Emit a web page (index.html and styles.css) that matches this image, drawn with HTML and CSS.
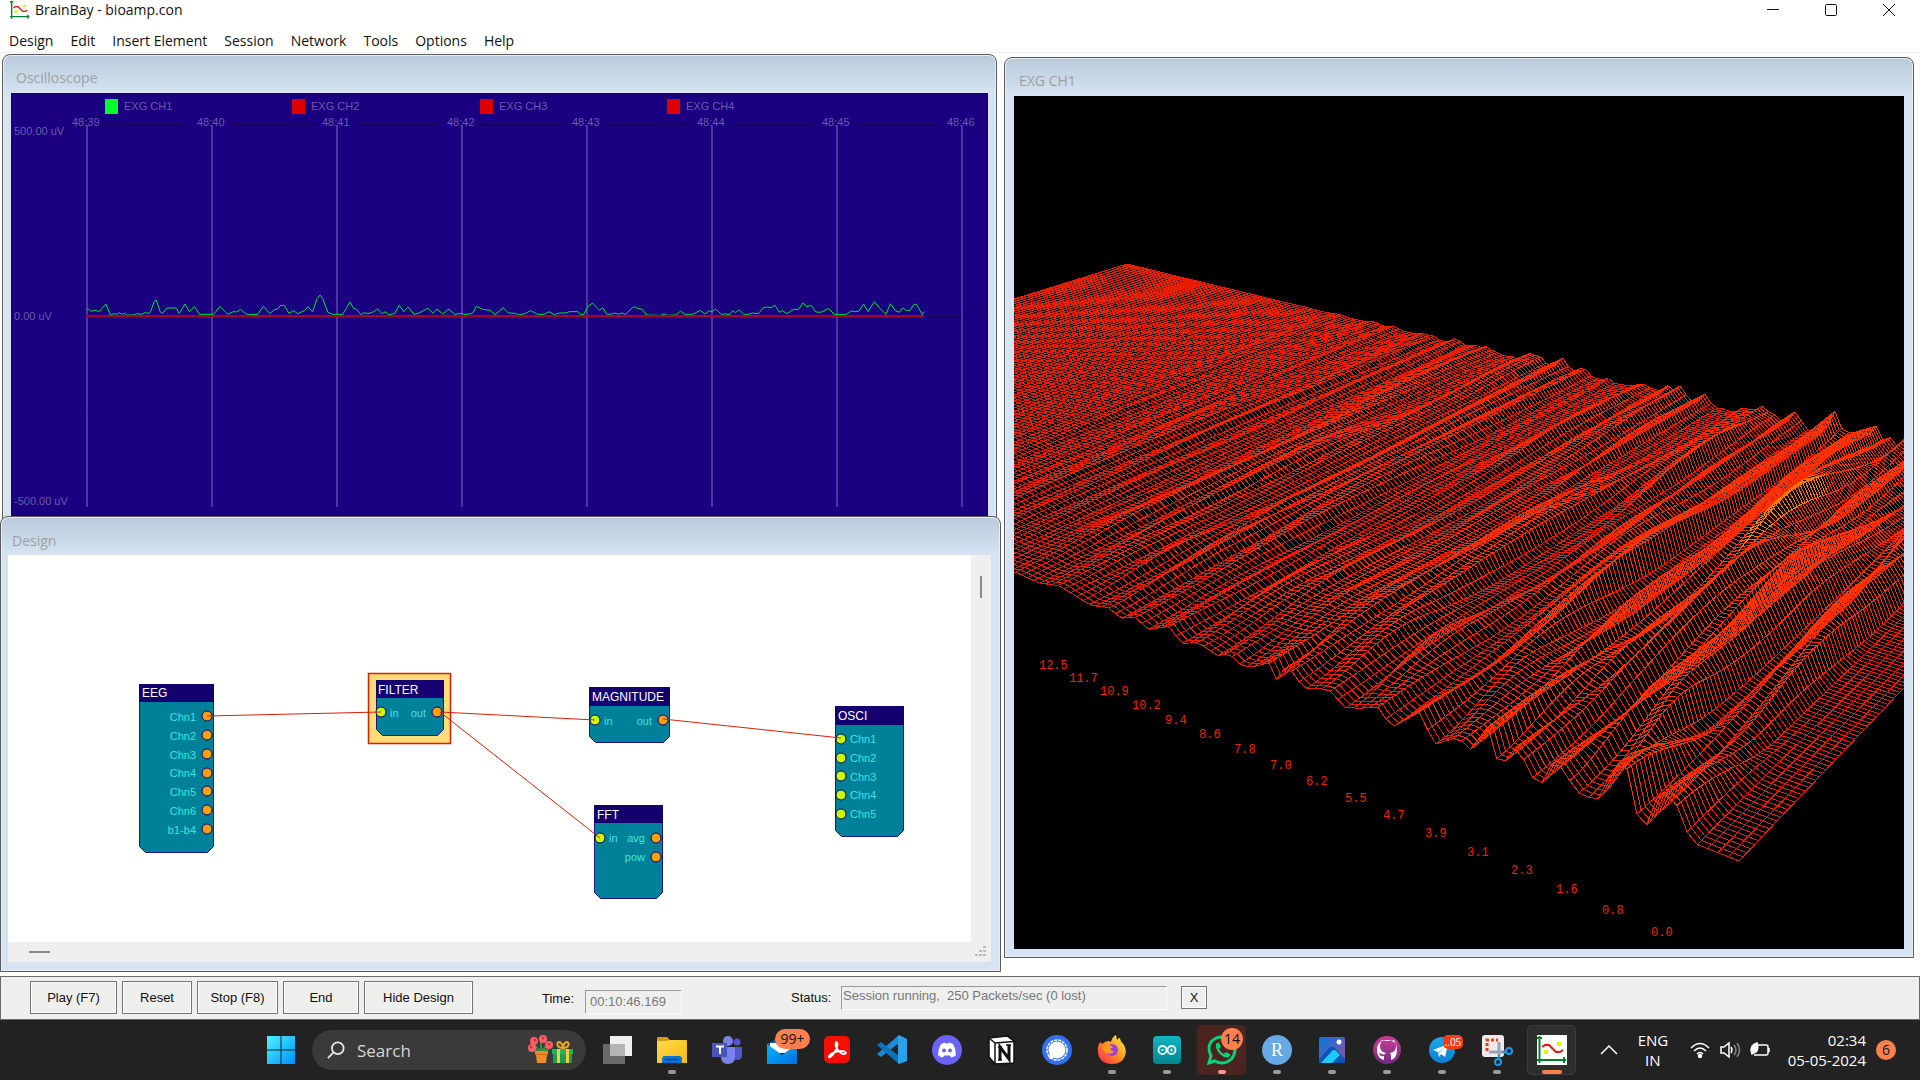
FILE: index.html
```html
<!DOCTYPE html>
<html lang="en">
<head>
<meta charset="utf-8">
<title>BrainBay - bioamp.con</title>
<link rel="stylesheet" href="styles.css">
</head>
<body>
<svg class="defs" aria-hidden="true">
  <defs>
    <linearGradient id="g-start" x1="0" y1="0" x2="1" y2="1"><stop offset="0" stop-color="#4df3ff"/><stop offset="1" stop-color="#0090ff"/></linearGradient>
    <linearGradient id="g-folder" x1="0" y1="0" x2="1" y2="1"><stop offset="0" stop-color="#ffdb4d"/><stop offset="1" stop-color="#f5b912"/></linearGradient>
    <linearGradient id="g-mail" x1="0" y1="0" x2="1" y2="1"><stop offset="0" stop-color="#00b4ff"/><stop offset="1" stop-color="#0070e0"/></linearGradient>
    <linearGradient id="g-fox" x1="1" y1="0" x2="0" y2="1"><stop offset="0" stop-color="#fff44f"/><stop offset=".5" stop-color="#ff9020"/><stop offset="1" stop-color="#ff2050"/></linearGradient>
    <linearGradient id="g-ard" x1="0" y1="0" x2="0" y2="1"><stop offset="0" stop-color="#12b5bd"/><stop offset="1" stop-color="#008592"/></linearGradient>
    <linearGradient id="g-photo" x1="0" y1="0" x2="1" y2="1"><stop offset="0" stop-color="#0078e0"/><stop offset="1" stop-color="#9a4f9c"/></linearGradient>
    <linearGradient id="g-git" x1="0" y1="0" x2="0" y2="1"><stop offset="0" stop-color="#cf3b96"/><stop offset="1" stop-color="#6d2b80"/></linearGradient>
    <linearGradient id="g-tg" x1="0" y1="0" x2="0" y2="1"><stop offset="0" stop-color="#20a6ea"/><stop offset="1" stop-color="#0a80d0"/></linearGradient>
    <symbol id="wave" viewBox="0 0 30 30">
      <path fill="#fffffd" d="M0 0h30v30H0z"/>
      <path stroke="#00802d" stroke-width="2" d="M2.500 1v27M0 25h29M27 22v6M0 3h5"/>
      <path fill="none" stroke="#f01010" stroke-width="2" d="M5 12l3-2h4l4 4 3 3h4l3-2"/>
      <path fill="#d4ff00" d="M7 15h4v4H7zM20 7h4v4h-4z"/>
    </symbol>
  </defs>
</svg>
<div class="app">
  <header class="titlebar">
    <svg class="app-icon" viewBox="0 0 30 30"><use href="#wave"/></svg>
    <h1 class="app-title">BrainBay - bioamp.con</h1>
    <div class="caption">
      <button class="cap-btn" aria-label="Minimize"><svg viewBox="0 0 12 12"><path d="M0 5.500h12"/></svg></button>
      <button class="cap-btn" aria-label="Maximize"><svg viewBox="0 0 12 12"><rect x=".5" y=".5" width="11" height="11" rx="1"/></svg></button>
      <button class="cap-btn" aria-label="Close"><svg viewBox="0 0 12 12"><path d="M0 0l12 12M12 0L0 12"/></svg></button>
    </div>
  </header>
  <nav class="menubar">
    <button>Design</button><button>Edit</button><button>Insert Element</button><button>Session</button><button>Network</button><button>Tools</button><button>Options</button><button>Help</button>
  </nav>

  <main class="mdi">
    <section class="window scope">
      <h2 class="window-title">Oscilloscope</h2>
      <div class="window-body">
        <svg class="fill">
          <g transform="translate(-11 -93)">
            <path class="scope-dim" d="M104 124.500H190M230 124.500H315M355 124.500H440M480 124.500H565M605 124.500H690M730 124.500H815M855 124.500H940M86 507.500H962M924 316.500H961M81 411.500H86"/>
            <path class="scope-grid" d="M87 125V507M212 125V507M337 125V507M462 125V507M587 125V507M712 125V507M837 125V507M962 125V507"/>
            <path fill="#00ff28" d="M105 99h13v15h-13z"/>
            <path fill="#dc0000" d="M292 99h13v15h-13zM480 99h13v15h-13zM667 99h13v15h-13z"/>
            <g class="scope-text">
              <text x="124" y="110">EXG CH1</text><text x="311" y="110">EXG CH2</text><text x="499" y="110">EXG CH3</text><text x="686" y="110">EXG CH4</text>
              <text x="72" y="126">48:39</text><text x="197" y="126">48:40</text><text x="322" y="126">48:41</text><text x="447" y="126">48:42</text><text x="572" y="126">48:43</text><text x="697" y="126">48:44</text><text x="822" y="126">48:45</text><text x="947" y="126">48:46</text>
              <text x="14" y="135">500.00 uV</text><text x="14" y="320">0.00 uV</text><text x="14" y="505">-500.00 uV</text>
            </g>
            <g transform="translate(0 280) scale(.6378 .3333)">
              <polyline class="trace" points="136,88 139,88 143,94 148,91 156,94 166,72 173,104 179,101 183,103 187,98 191,103 195,100 199,105 210,105 214,101 222,103 228,97 232,101 236,95 242,64 245,60 251,95 255,100 262,84 276,84 281,100 290,72 297,95 305,80 313,103 335,103 345,79 357,103 366,95 371,96 377,88 385,101 391,104 404,103 413,79 423,101 431,88 435,88 440,76 446,77 453,100 460,92 467,101 477,92 483,80 490,96 497,56 502,45 506,56 514,97 523,104 537,104 543,85 549,66 554,85 559,88 566,104 571,98 577,101 586,95 592,87 599,101 605,95 610,105 619,100 626,76 633,95 640,81 649,103 657,99 671,85 679,100 685,87 694,102 704,87 713,103 724,100 729,104 741,100 747,79 757,88 769,91 776,104 789,83 797,99 808,100 814,105 824,100 832,92 843,103 853,103 861,95 869,104 877,99 887,99 893,95 906,95 910,103 915,104 922,79 929,69 937,85 940,91 945,83 951,102 957,103 964,99 970,103 975,99 981,103 988,89 994,80 1000,85 1007,88 1014,105 1036,106 1041,102 1046,106 1060,105 1067,93 1074,103 1086,103 1098,91 1105,102 1112,92 1116,95 1122,87 1131,103 1138,102 1144,104 1149,92 1153,98 1159,89 1166,103 1174,103 1180,99 1189,101 1197,83 1204,81 1209,83 1215,76 1222,97 1227,92 1234,101 1240,93 1245,88 1252,88 1259,69 1265,80 1272,76 1279,96 1287,97 1299,85 1308,103 1327,103 1335,93 1341,95 1347,93 1354,72 1361,95 1371,65 1379,84 1389,103 1396,71 1404,92 1410,97 1415,84 1421,91 1427,91 1433,73 1437,73 1446,104 1449,95"/>
            </g>
            <path stroke="#aa0028" stroke-width="2" d="M86 316H924"/>
          </g>
        </svg>
      </div>
    </section>

    <section class="window design">
      <h2 class="window-title">Design</h2>
      <div class="window-body design-body">
        <svg class="fill">
          <defs><circle id="o" r="5" fill="#ffa000" stroke="#14006e"/><circle id="i" r="5" fill="#c8ff00" stroke="#14006e"/></defs>
          <g transform="translate(-8 -555)">
            <rect x="368.500" y="673.500" width="82" height="70" fill="#ffdc78" stroke="#dc1e00" stroke-width="1.500"/>
            <g class="node-body">
              <path d="M139.500 684.500h74v162l-6 6h-62l-6-6z"/>
              <path d="M376.500 680.500h67v49l-6 6h-55l-6-6z"/>
              <path d="M589.500 687.500h80v49l-6 6h-68l-6-6z"/>
              <path d="M594.500 805.500h68v87l-6 6h-56l-6-6z"/>
              <path d="M835.500 706.500h68v124l-6 6h-56l-6-6z"/>
            </g>
            <path fill="#14006e" d="M139 684h75v18h-75zM376 680h68v18h-68zM589 687h81v19h-81zM594 805h69v18h-69zM835 706h69v19h-69z"/>
            <g class="node-title"><text x="142" y="697">EEG</text><text x="378" y="694">FILTER</text><text x="592" y="701">MAGNITUDE</text><text x="597" y="819">FFT</text><text x="838" y="720">OSCI</text></g>
            <g class="port-text end"><text x="196" y="721">Chn1</text><text x="196" y="740">Chn2</text><text x="196" y="759">Chn3</text><text x="196" y="777">Chn4</text><text x="196" y="796">Chn5</text><text x="196" y="815">Chn6</text><text x="196" y="834">b1-b4</text><text x="426" y="717">out</text><text x="652" y="725">out</text><text x="645" y="842">avg</text><text x="645" y="861">pow</text></g>
            <g class="port-text"><text x="390" y="717">in</text><text x="604" y="725">in</text><text x="609" y="842">in</text><text x="850" y="743">Chn1</text><text x="850" y="762">Chn2</text><text x="850" y="781">Chn3</text><text x="850" y="799">Chn4</text><text x="850" y="818">Chn5</text></g>
            <use href="#o" x="207" y="716"/><use href="#o" x="207" y="735"/><use href="#o" x="207" y="754"/><use href="#o" x="207" y="773"/><use href="#o" x="207" y="791"/><use href="#o" x="207" y="810"/><use href="#o" x="207" y="829"/>
            <use href="#i" x="381" y="712"/><use href="#o" x="437" y="712"/><use href="#i" x="595" y="720"/><use href="#o" x="663" y="720"/>
            <use href="#i" x="600" y="838"/><use href="#o" x="656" y="838"/><use href="#o" x="656" y="857"/>
            <use href="#i" x="841" y="739"/><use href="#i" x="841" y="758"/><use href="#i" x="841" y="776"/><use href="#i" x="841" y="795"/><use href="#i" x="841" y="814"/>
            <path class="wire" d="M207 716L381 712M440 712L595 720M440 712L600 838M663 719L841 738"/>
          </g>
        </svg>
        <div class="vscroll"><span class="thumb-v"></span></div>
        <div class="hscroll"><span class="thumb-h"></span></div>
        <svg class="grip" viewBox="0 0 12 12"><path fill="#bdbdbd" d="M8 0h3v2H8zM4 4h3v2H4zM8 4h3v2H8zM0 8h3v2H0zM4 8h3v2H4zM8 8h3v2H8z"/></svg>
      </div>
    </section>

    <section class="window spectrum">
      <h2 class="window-title">EXG CH1</h2>
      <div class="window-body">
        <svg class="fill">
          <g id="surface" class="surface"></g>
          <g class="freq">
            <text x="25" y="573">12.5</text><text x="55" y="586">11.7</text><text x="86" y="599">10.9</text><text x="118" y="613">10.2</text><text x="151" y="628">9.4</text><text x="185" y="642">8.6</text><text x="220" y="657">7.8</text><text x="256" y="673">7.0</text><text x="292" y="689">6.2</text><text x="331" y="706">5.5</text><text x="369" y="723">4.7</text><text x="411" y="741">3.9</text><text x="453" y="760">3.1</text><text x="497" y="778">2.3</text><text x="542" y="797">1.6</text><text x="588" y="818">0.8</text><text x="637" y="840">0.0</text>
          </g>
        </svg>
      </div>
    </section>
  </main>

  <section class="controls">
    <div class="buttons">
      <button class="push w-play">Play (F7)</button><button class="push w-reset">Reset</button><button class="push w-stop">Stop (F8)</button><button class="push w-end">End</button><button class="push w-hide">Hide Design</button>
    </div>
    <label class="field time"><span>Time:</span><input value="00:10:46.169" readonly></label>
    <label class="field status"><span>Status:</span><input value="Session running,&nbsp; 250 Packets/sec (0 lost)" readonly></label>
    <button class="push close">X</button>
  </section>

  <footer class="taskbar">
    <button class="task start" aria-label="Start"><svg viewBox="0 0 30 30"><path fill="url(#g-start)" d="M1 1h13.500v13.500H1zM15.500 1H29v13.500H15.500zM1 15.500h13.500V29H1zM15.500 15.500H29V29H15.500z"/></svg></button>
    <label class="search">
      <svg class="glass" viewBox="0 0 20 20"><circle cx="12" cy="8" r="6.500"/><path d="M7 13l-6 6"/></svg>
      <input type="text" placeholder="Search" aria-label="Search">
      <svg class="gift" viewBox="0 0 46 30">
        <path stroke="#3b8f4a" stroke-width="2" fill="none" d="M13 17L6 10M13 17l0-11M13 17l8-9M13 17L4 15M13 17l8-3"/>
        <g fill="#ff5e67"><circle cx="6" cy="6" r="4"/><circle cx="15" cy="4" r="4"/><circle cx="4" cy="13" r="4"/><circle cx="21" cy="10" r="4"/></g>
        <g fill="#d9333f"><circle cx="7" cy="5" r="1.500"/><circle cx="15" cy="3" r="1.500"/><circle cx="3" cy="12" r="1.500"/><circle cx="21" cy="9" r="1.500"/></g>
        <path fill="#f08a24" d="M7 16h13v4h-1l-1 8H9L8 20H7z"/><path fill="#d06a10" d="M7 19h13v1H7z"/>
        <path fill="#22b35e" d="M24 14h21v5H24z"/><path fill="#18a050" d="M25 19h19v9H25z"/><path fill="#ffc83d" d="M29 14h3v14h-3zM38 14h3v14h-3z"/>
        <path fill="none" stroke="#f5a623" stroke-width="2" d="M35 13c-6 0-7-5-4-6 2 0 4 3 4 6 0-3 2-6 4-6 3 1 2 6-4 6"/>
      </svg>
    </label>
    <div class="apps">
      <button class="task" aria-label="Task view"><svg viewBox="0 0 30 30"><path fill="#6a6a69" d="M1 9h22v20H1z"/><path fill="#efefed" d="M8 1h22v20H8z"/><path fill="#b5b5b3" d="M8 9h15v12H8z"/></svg></button>
      <button class="task run" aria-label="File Explorer"><svg viewBox="0 0 30 30"><path fill="#d99a10" d="M0 3q0-1 1-1h9l3 3v4H0z"/><path fill="url(#g-folder)" d="M0 6h10l2-1h17q1 0 1 1v22H0z"/><path fill="#0a74d6" d="M5 28v-4q0-3 3-3h14q3 0 3 3v4z"/><path stroke="#064a94" stroke-width="1.500" d="M8 24.500h14"/></svg></button>
      <button class="task" aria-label="Teams"><svg viewBox="0 0 30 30"><circle cx="16" cy="6" r="5" fill="#7b83eb"/><circle cx="25" cy="7" r="3.500" fill="#5059c9"/><path fill="#5059c9" d="M20 12h10v8q0 5-5 5-5 0-5-5z"/><path fill="#7b83eb" d="M9 12h14v10q0 7-7 7-7 0-7-7z"/><path fill="#4b53bc" d="M0 8h15v14H0z"/><path stroke="#fff" stroke-width="2" d="M4 11.500h8M8 11v8"/></svg></button>
      <button class="task" aria-label="Mail"><svg viewBox="0 0 30 30"><path fill="#0b5cad" d="M0 9L15 1l15 8v3H0z"/><path fill="#fff" d="M3 8h24v10H3z"/><path fill="url(#g-mail)" d="M0 9l15 11L30 9v20H0z"/></svg><span class="badge wide">99+</span></button>
      <button class="task" aria-label="Acrobat"><svg viewBox="0 0 30 30"><rect x="2" y="1" width="26" height="27" rx="5" fill="#f40f02"/><path fill="none" stroke="#fff" stroke-width="1.800" d="M14 7c3 0 1 7-2 11-3 5-6 5-5 3 2-3 8-5 13-5 4 0 5 3 2 3-4 0-10-7-8-12z"/></svg></button>
      <button class="task" aria-label="Visual Studio Code"><svg viewBox="0 0 30 30"><path fill="#1f8ad2" d="M22 0v8L4 22l-4-3z"/><path fill="#0b73bd" d="M0 10l4-3 18 14v8z"/><path fill="#2aa2ee" d="M22 0l8 4v22l-8 3-1-1V1z"/></svg></button>
      <button class="task" aria-label="Discord"><svg viewBox="0 0 30 30"><circle cx="15" cy="15" r="15" fill="#6b63f5"/><path fill="#fff" d="M9 9q3-1.500 4-1.500l1 1h2l1-1q1 0 4 1.500 3 5 3 11-2 2-5 2.500l-1-2h-6l-1 2q-3-.5-5-2.500 0-6 3-11z"/><circle cx="12" cy="15.500" r="2" fill="#6b63f5"/><circle cx="18" cy="15.500" r="2" fill="#6b63f5"/></svg></button>
      <button class="task" aria-label="Notion"><svg viewBox="0 0 30 30"><path fill="#fff" stroke="#111" stroke-width="1.500" d="M2 3l18-2 7 5v22L8 29l-6-7z"/><path fill="none" stroke="#111" stroke-width="1.500" d="M2 3l6 5v21M8 8l19-1.500"/><path fill="none" stroke="#111" stroke-width="3" d="M13 25V12l9 12V10"/><path stroke="#111" stroke-width="1.500" d="M11 12h4M11 25h4M19 10h5"/></svg></button>
      <button class="task" aria-label="Signal"><svg viewBox="0 0 30 30"><circle cx="15" cy="15" r="15" fill="#3272f0"/><circle cx="15" cy="15" r="8.500" fill="#fff"/><path fill="#fff" d="M7 24l1-6 4 5z"/><circle cx="15" cy="15" r="10" fill="none" stroke="#fff" stroke-width="1.500" stroke-dasharray="3 1"/></svg></button>
      <button class="task run" aria-label="Firefox"><svg viewBox="0 0 30 30"><path fill="url(#g-fox)" d="M3 7l2 2q3-3 7-3l2 1q1-5 5-7l1 5q1-2 3-2 0 3 4 7 3 6 1 11-3 8-13 8Q3 29 1 18 0 12 3 7z"/><circle cx="15" cy="15" r="6" fill="#9a3fe0"/><path fill="#ff9a1f" d="M5 12l7-2q3 1 4 2l-3 2 4 3q-3 3-7 1-4-2-5-6z"/></svg></button>
      <button class="task run" aria-label="Arduino"><svg viewBox="0 0 30 30"><rect x="1" y="1" width="28" height="28" rx="4" fill="url(#g-ard)"/><circle cx="10.500" cy="15" r="4" fill="none" stroke="#e8ffff" stroke-width="1.800"/><circle cx="19.500" cy="15" r="4" fill="none" stroke="#e8ffff" stroke-width="1.800"/><path stroke="#e8ffff" d="M9 15h3M18 15h3M19.500 13.500v3"/></svg></button>
      <button class="task run alert" aria-label="WhatsApp"><svg viewBox="0 0 30 30"><path fill="none" stroke="#0bd07a" stroke-width="3" d="M2 28l2-7Q0 13 4 7q4-5 11-5 12 1 13 13-1 12-13 13-4 0-7-2z"/><path fill="#0bd07a" d="M9 9q2-2 3-1l2 4-2 2q2 4 5 5l2-2 4 2q1 2-1 3-4 2-9-3-5-5-4-10z"/></svg><span class="badge round">14</span></button>
      <button class="task run" aria-label="RStudio"><svg viewBox="0 0 30 30"><circle cx="15" cy="15" r="15" fill="#67a9e4"/><text class="r-mark" x="15" y="21" text-anchor="middle">R</text></svg></button>
      <button class="task run" aria-label="Photos"><svg viewBox="0 0 30 30"><rect x="2" y="2" width="26" height="26" rx="2" fill="url(#g-photo)"/><path fill="#0a56b8" d="M2 24l10-11q3-3 6 0l10 11v2q0 2-2 2H2z"/><path fill="#20c8ff" d="M4 28L15 16q2-2 4 0l4 4-8 8z"/><circle cx="22" cy="7" r="2.500" fill="#fff"/></svg></button>
      <button class="task run" aria-label="GitHub"><svg viewBox="0 0 30 30"><circle cx="15" cy="15" r="14" fill="url(#g-git)"/><path fill="#fff" d="M12 25v-4q-4 1-5-3l3 1q1 1 3 0l1-1q-6-1-6-7 0-2 1-3 0-3 1-3l3 1h6l3-1q1 1 1 3 1 1 1 3 0 6-6 7l1 2v5q6-2 6-10Q25 5 15 5 5 5 5 15q0 8 7 10z"/></svg></button>
      <button class="task run" aria-label="Telegram"><svg viewBox="0 0 30 30"><circle cx="15" cy="15" r="13" fill="url(#g-tg)"/><path fill="#fff" d="M6 15l15-6-3 13-4-3-2 3-1-5z"/><path fill="#b5d5ec" d="M11 17l7-5-5 6-1 4z"/></svg><span class="badge tele">..05</span></button>
      <button class="task run" aria-label="Snipping Tool"><svg viewBox="0 0 30 30"><rect width="22" height="22" rx="3" fill="#ececec"/><path fill="none" stroke="#f03a17" stroke-width="3" stroke-dasharray="3 2" d="M5 16V5h11"/><path fill="none" stroke="#a0a4ad" stroke-width="3" d="M7 17h16M17 7v14"/><circle cx="27" cy="16" r="3" fill="none" stroke="#149cf2" stroke-width="2"/><circle cx="16" cy="27" r="3" fill="none" stroke="#149cf2" stroke-width="2"/><path stroke="#149cf2" stroke-width="2" d="M20 17h4M17 20v4"/></svg></button>
      <button class="task run current" aria-label="BrainBay"><svg viewBox="0 0 30 30"><use href="#wave"/></svg></button>
    </div>
    <div class="tray">
      <button class="tray-btn chev" aria-label="Show hidden icons"><svg viewBox="0 0 18 10"><path d="M1 9l8-8 8 8"/></svg></button>
      <button class="tray-btn lang">ENG<br>IN</button>
      <button class="tray-btn quick" aria-label="Network, volume, battery">
        <svg viewBox="0 0 20 16"><path d="M1 6q9-9 18 0M4 9q6-6 12 0M7 12q3-3 6 0"/><circle cx="10" cy="14" r="1.500" fill="#fff"/></svg>
        <svg viewBox="0 0 20 16"><path d="M1 5h3l5-4v14l-5-4H1zM11 5q2 3 0 6"/><path opacity=".45" d="M14 3q4 5 0 10M17 1q5 7 0 14"/></svg>
        <svg viewBox="0 0 20 16"><path d="M8 3h8q2 0 2 2v6q0 2-2 2H4M19 6v4"/><path fill="#fff" d="M1 8q0-5 6-7 2 6-1 9l-4 2z"/></svg>
      </button>
      <button class="tray-btn clock">02:34<br>05-05-2024</button>
      <span class="count">6</span>
    </div>
  </footer>
</div>
<script src="surface.js"></script>
</body>
</html>
```
FILE: styles.css
```css
* { box-sizing: border-box; }
body { margin: 0; background: #fffffd; color: #111; font-family: "Open Sans", "Noto Sans", sans-serif; }
button { margin: 0; padding: 0; border: 0; background: none; color: inherit; font: inherit; }
.defs { position: absolute; width: 0; height: 0; }
.app { display: flex; flex-direction: column; min-height: 100vh; }

.titlebar { display: flex; align-items: center; height: 20px; padding-left: 10px; gap: 5px; }
.app-icon { width: 20px; height: 20px; }
.app-title { margin: 0; font-size: 14px; font-weight: 400; line-height: 20px; }
.caption { display: flex; margin-left: auto; padding-right: 2px; }
.cap-btn { width: 58px; height: 20px; display: grid; place-items: center; }
.cap-btn svg { width: 12px; height: 12px; fill: none; stroke: #111; overflow: visible; }

.menubar { display: flex; height: 33px; padding: 10px 0 0 1px; border-bottom: 1px solid #efefec; }
.menubar button { padding: 0 9px 0 8px; font-size: 14px; line-height: 20px; }

.mdi { position: relative; flex: 1; min-height: 923px; overflow: hidden; }
.window { position: absolute; display: flex; flex-direction: column; padding: 0 8px 8px; border: 1px solid #5a5a5a; border-radius: 8px 8px 0 0; box-shadow: inset 0 0 0 1px #e8eef5; background: linear-gradient(#b9cbda, #d5e3f2 38px); }
.window-title { margin: 0; height: 37px; padding: 13px 5px 0; color: #a0a0a0; font-size: 14px; font-weight: 400; line-height: 20px; }
.window-body { flex: 1; min-height: 0; }
.fill { display: block; width: 100%; height: 100%; }
.scope { inset: 1px 923px 440px 2px; }
.scope .window-title { height: 38px; }
.scope .window-body { background: #1a0080; }
.design { inset: 463px 919px 4px 0; padding: 0 9px 9px 7px; }
.spectrum { inset: 4px 6px 18px 1004px; padding: 0 9px 8px; }
.design .window-title, .spectrum .window-title { height: 38px; }
.design .window-title { padding: 14px 4px 0; }
.spectrum .window-body { background: #000; }

.scope-grid { stroke: #4b35a0; stroke-width: 2; }
.scope-dim { stroke: #12005c; }
.scope-text { fill: #6f59a8; font: 11px "Liberation Sans", sans-serif; }
.trace { fill: none; stroke: #00e632; stroke-width: 1; vector-effect: non-scaling-stroke; }

.design-body { display: grid; grid-template: 1fr 20px / 1fr 20px; background: #efefef; }
.design-body .fill { background: #fffffd; min-height: 0; }
.vscroll { padding: 21px 9px; }
.thumb-v { display: block; width: 2px; height: 22px; background: #8a8a8a; }
.hscroll { padding: 9px 21px; }
.thumb-h { display: block; width: 21px; height: 2px; background: #8a8a8a; }
.grip { width: 12px; height: 12px; align-self: center; justify-self: center; }
.node-body { fill: #008099; stroke: #1e148c; }
.node-title { fill: #fff; font: 12px "Liberation Sans", sans-serif; }
.port-text { fill: #3ce6dc; font: 11px "Liberation Sans", sans-serif; }
.end { text-anchor: end; }
.wire { fill: none; stroke: #dc1e0a; }

.surface { fill: none; shape-rendering: crispEdges; }
.freq { fill: #f52300; font: 12px "Liberation Mono", monospace; }

.controls { display: flex; align-items: flex-start; height: 44px; padding: 4px 0 0 29px; border: 1px solid #6a6a6a; background: #efefee; font: 13px "Liberation Sans", sans-serif; }
.buttons { display: flex; gap: 5px; }
.push { height: 33px; border: 1px solid #757575; box-shadow: inset 0 0 0 1px #fff; }
.w-play { width: 87px; } .w-reset { width: 70px; } .w-stop { width: 81px; } .w-end { width: 76px; } .w-hide { width: 109px; }
.field { display: flex; }
.field span { line-height: 20px; padding-top: 8px; white-space: nowrap; }
.time span { width: 32px; }
.status span { width: 41px; }
.field input { height: 24px; padding: 0 0 2px 4px; border: 1px solid; border-color: #999 #fff #fff #999; background: none; color: #777; font: inherit; }
.time { margin-left: 69px; gap: 11px; }
.time input { width: 97px; margin-top: 9px; }
.status { margin-left: 109px; gap: 9px; }
.status span { padding-top: 7px; }
.status input { width: 326px; margin-top: 5px; padding: 0 0 5px 1px; }
.close { width: 26px; height: 23px; margin: 5px 0 0 14px; }

.taskbar { display: flex; height: 60px; padding-left: 253px; background: #222; color: #fff; }
.task { position: relative; width: 55px; height: 60px; display: grid; place-items: center; }
.task svg { width: 30px; height: 30px; overflow: visible; }
.task.start { margin-right: 4px; }
.search { display: flex; align-items: center; width: 274px; height: 40px; margin: 10px 3px 0 0; padding: 0 12px 0 15px; border-radius: 20px; background: #3a3a39; }
.glass { width: 18px; height: 20px; fill: none; stroke: #e6e6e6; stroke-width: 2; }
.search input { flex: 1; min-width: 0; margin-left: 10px; border: 0; background: none; font: 17px "Open Sans", sans-serif; color: #ddd; }
.search input::placeholder { color: #d6d6d6; opacity: 1; }
.gift { width: 46px; height: 30px; }
.apps { display: flex; }
.run::after { content: ""; position: absolute; left: 24px; bottom: 6px; width: 8px; height: 4px; border-radius: 2px; background: #9a9a9a; }
.alert::before, .current::before { content: ""; position: absolute; inset: 5px 3px; border-radius: 5px; background: #4b2420; }
.current::before { background: #2e2e2e; border: 1px solid #3c3c3c; }
.alert svg, .current svg { position: relative; }
.alert::after { background: #ff9489; }
.current::after { left: 18px; width: 20px; background: #ff7f4d; }
.badge { position: absolute; display: grid; place-items: center; background: #ff7f4d; color: #111; font-size: 14px; line-height: 20px; height: 20px; }
.wide { top: 9px; left: 21px; width: 35px; border-radius: 10px; }
.round { top: 8px; left: 27px; width: 22px; height: 22px; border-radius: 50%; }
.tele { top: 15px; left: 29px; width: 20px; height: 14px; border-radius: 5px; background: #ff3b14; color: #fff; font-size: 10px; line-height: 14px; }
.r-mark { fill: #fff; font: 18px "Liberation Serif", serif; }
.tray { display: flex; align-items: center; margin-left: auto; padding-right: 24px; }
.tray-btn { font-size: 15px; line-height: 20px; }
.tray-btn svg { fill: none; stroke: #fff; stroke-width: 1.5; }
.chev { margin-right: 20px; line-height: 0; }
.chev svg { width: 18px; height: 10px; }
.lang { width: 30px; margin-right: 22px; }
.quick { display: flex; gap: 10px; margin-right: 18px; }
.quick svg { width: 20px; height: 16px; overflow: visible; }
.clock { text-align: right; margin-right: 10px; }
.count { width: 20px; height: 20px; border-radius: 50%; background: #ff7f4d; color: #111; font-size: 14px; line-height: 20px; text-align: center; }
```
FILE: surface.js
```js
// Spectrum history drawn as a wireframe: u runs along frequency, v along time.
(function () {
  var U = 170, V = 130;
  var D = [725, 765], B = [-388, 323], A = [113, 168], C = [1071, 402];
  var dx1 = B[0] - A[0], dx2 = C[0] - A[0], sx = D[0] - B[0] + A[0] - C[0];
  var dy1 = B[1] - A[1], dy2 = C[1] - A[1], sy = D[1] - B[1] + A[1] - C[1];
  var det = dx1 * dy2 - dx2 * dy1;
  var g = (sx * dy2 - dx2 * sy) / det, h = (dx1 * sy - sx * dy1) / det;

  // newest spectrum: [distance from the near corner, height]
  var front = [[0, 0], [45, 0], [54, 10], [66, 36], [81, 30], [92, 0], [101, 2], [113, 48], [125, 42], [140, 6], [157, 2],
    [169, 12], [184, 28], [200, -6], [210, 6], [222, 26], [240, -4], [249, 36], [269, 4], [281, 12], [307, -6],
    [317, 24], [330, 12], [349, -6], [358, 12], [375, 4], [393, -3], [411, 9], [435, 0], [452, 17], [464, -5], [470, 12], [485, 2], [497, -3],
    [510, 6], [520, -2], [540, 4], [558, -4], [570, 9], [590, -3], [605, 5], [618, -3], [632, 4], [647, -2], [680, 6], [700, 0], [728, 2]];

  function hash(i, j) {
    var s = Math.sin(i * 127.1 + j * 311.7 + 4.2) * 43758.5453;
    return s - Math.floor(s);
  }
  function ease(t) { return t * t * (3 - 2 * t); }
  function noise(x, y) {
    var i = Math.floor(x), j = Math.floor(y), a = ease(x - i), b = ease(y - j);
    return (hash(i, j) * (1 - a) + hash(i + 1, j) * a) * (1 - b) + (hash(i, j + 1) * (1 - a) + hash(i + 1, j + 1) * a) * b;
  }
  function edge(u) {
    var x = D[0] - ((B[0] * (1 + g) - D[0]) * u + D[0]) / (g * u + 1);
    for (var k = 1; k < front.length; k++) {
      if (x <= front[k][0]) {
        var p = front[k - 1], q = front[k];
        return p[1] + (q[1] - p[1]) * (x - p[0]) / (q[0] - p[0]);
      }
    }
    return 0;
  }
  function crest(u, v) {
    return Math.exp(-Math.pow((u - 0.147) / 0.01, 2) - Math.pow((v - 0.64) / 0.16, 2));
  }
  function height(u, v) {
    var env = Math.min(1, Math.max(0, (u - 0.022) / 0.03)) * (84 * Math.exp(-u * 3.8) + 1) * Math.min(1, Math.max(0, (0.9 - u) / 0.4));
    var n = noise(u * 85, v * 2.3) * 0.72 + noise(u * 150 + 40, v * 4 + 9) * 0.28;
    var z = env * Math.max(0, n * n * 1.9 - 0.15);
    var mix = ease(Math.min(1, v / 0.2));
    z = edge(u) * (1 - mix) + z * mix;
    return z + 38 * crest(u, v);
  }
  function point(i, j) {
    var u = i / U, v = j / V, w = g * u + h * v + 1, z = height(u, v);
    return [
      ((B[0] * (1 + g) - D[0]) * u + (C[0] * (1 + h) - D[0]) * v + D[0]) / w,
      ((B[1] * (1 + g) - D[1]) * u + (C[1] * (1 + h) - D[1]) * v + D[1] - z * 1.15) / w, z, crest(u, v)];
  }
  var colors = ["#e61e00", "#f52800", "#ff3200", "#ff7800"], paths = ["", "", "", ""], pts = [];
  for (var i = 0; i <= U; i++) {
    pts[i] = [];
    for (var j = 0; j <= V; j++) pts[i][j] = point(i, j);
  }
  function seg(p, q) {
    if ((p[0] < -20 && q[0] < -20) || (p[0] > 910 && q[0] > 910)) return;
    var z = (p[2] + q[2]) / 2, c = p[3] + q[3] > 1.1 ? 3 : z < 7 ? 0 : z < 20 ? 1 : 2;
    paths[c] += "M" + p[0].toFixed(1) + " " + p[1].toFixed(1) + "L" + q[0].toFixed(1) + " " + q[1].toFixed(1);
  }
  for (i = 0; i <= U; i++) for (j = 0; j <= V; j++) {
    if (i < U) seg(pts[i][j], pts[i + 1][j]);
    if (j < V) seg(pts[i][j], pts[i][j + 1]);
  }
  var root = document.getElementById("surface");
  paths.forEach(function (d, k) {
    var p = document.createElementNS("http://www.w3.org/2000/svg", "path");
    p.setAttribute("d", d);
    p.setAttribute("stroke", colors[k]);
    root.appendChild(p);
  });
})();
```
